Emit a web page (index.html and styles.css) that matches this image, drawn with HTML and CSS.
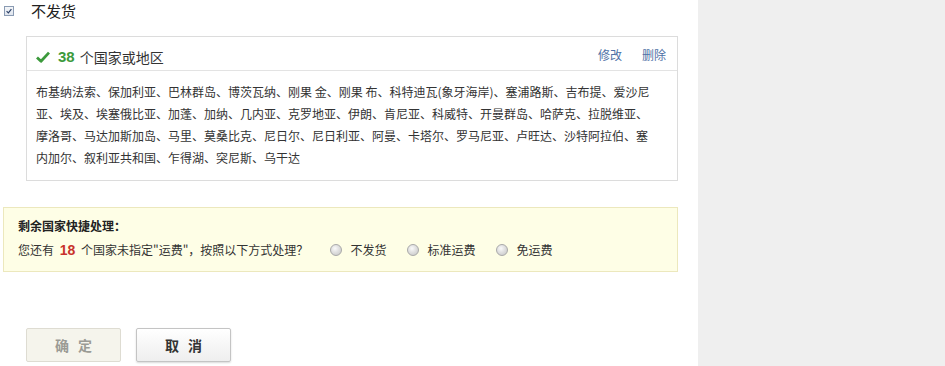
FILE: index.html
```html
<!DOCTYPE html>
<html lang="zh-CN">
<head>
<meta charset="utf-8">
<title>运费模板 - 不发货</title>
<link rel="stylesheet" href="styles.css">
</head>
<body>
<div class="page">
  <div class="main">
    <label class="opt-head">
      <span class="cb"><svg viewBox="0 0 10 10" width="10" height="10"><path d="M2 5.2 L4.2 7.4 L8 2.6" fill="none" stroke="#2b3f66" stroke-width="1.4"/></svg></span>
      <span class="opt-title">不发货</span>
    </label>

    <div class="region">
      <div class="region-head">
        <svg class="ok" viewBox="0 0 14 12" width="14" height="12"><path d="M1 6.4 L5 10.2 L13 1.6" fill="none" stroke="#3c9a3c" stroke-width="2.8" stroke-linejoin="round"/></svg>
        <b class="num">38</b>
        <span class="head-text">个国家或地区</span>
        <span class="actions"><a href="#">修改</a><a href="#">删除</a></span>
      </div>
      <div class="region-body">布基纳法索、保加利亚、巴林群岛、博茨瓦纳、刚果 金、刚果 布、科特迪瓦(象牙海岸)、塞浦路斯、吉布提、爱沙尼亚、埃及、埃塞俄比亚、加蓬、加纳、几内亚、克罗地亚、伊朗、肯尼亚、科威特、开曼群岛、哈萨克、拉脱维亚、摩洛哥、马达加斯加岛、马里、莫桑比克、尼日尔、尼日利亚、阿曼、卡塔尔、罗马尼亚、卢旺达、沙特阿拉伯、塞内加尔、叙利亚共和国、乍得湖、突尼斯、乌干达</div>
    </div>

    <div class="quick">
      <div class="quick-title">剩余国家快捷处理：</div>
      <div class="quick-row">
        <span class="q">您还有 <b class="red">18</b> 个国家未指定"运费"，按照以下方式处理？</span>
        <label class="radio"><span class="rd"></span>不发货</label>
        <label class="radio"><span class="rd"></span>标准运费</label>
        <label class="radio"><span class="rd"></span>免运费</label>
      </div>
    </div>

    <div class="btns">
      <button class="btn btn-disabled" type="button">确定</button>
      <button class="btn btn-cancel" type="button">取消</button>
    </div>
  </div>
  <aside class="side"></aside>
</div>
</body>
</html>
```
FILE: styles.css
```css
* { box-sizing: border-box; }
html, body { margin: 0; padding: 0; }
body {
  font-family: "Noto Sans CJK SC", "Liberation Sans", sans-serif;
  font-size: 12px;
  color: #333;
  background: #fff;
}
.page {
  display: flex;
  min-height: 366px;
}
.main {
  width: 698px;
  padding-left: 3px;
}
.side {
  flex: 1;
  background: #efefef;
}

/* header option */
.opt-head {
  display: flex;
  align-items: center;
  height: 22px;
}
.cb {
  width: 10px;
  height: 10px;
  border: 1px solid #8a9bb3;
  background: linear-gradient(#f4f6f9, #dfe5ee);
  display: flex;
  align-items: center;
  justify-content: center;
  margin-right: 17px;
  margin-left: 1px;
}
.cb svg { width: 8px; height: 8px; display: block; }
.opt-title {
  font-size: 15px;
  line-height: 20px;
  color: #222;
}

/* region box */
.region {
  margin: 14px 0 0 23px;
  width: 652px;
  border: 1px solid #dcdcdc;
}
.region-head {
  display: flex;
  align-items: center;
  height: 34px;
  padding: 6px 11px 0 9px;
  border-bottom: 1px solid #e3e3e3;
  font-size: 14px;
}
.ok { display: block; margin-right: 8px; }
.num {
  color: #3c9a3c;
  font-family: "Liberation Sans", sans-serif;
  font-size: 15px;
  margin-right: 5px;
}
.head-text { color: #333; }
.actions {
  margin-left: auto;
  display: flex;
  gap: 20px;
  font-size: 12px;
  margin-top: -4px;
}
.actions a {
  color: #4f71a6;
  text-decoration: none;
}
.region-body {
  padding: 10px 21px 11px 9px;
  line-height: 22px;
  font-size: 12px;
  color: #333;
}

/* quick box */
.quick {
  margin-top: 26px;
  width: 675px;
  height: 65px;
  background: #fefee6;
  border: 1px solid #ece8bd;
  padding: 9px 14px 0 14px;
}
.quick-title {
  font-weight: bold;
  line-height: 18px;
  color: #222;
}
.quick-row {
  display: flex;
  align-items: center;
  margin-top: 6px;
  line-height: 18px;
}
.q { margin-right: 22px; }
.red {
  color: #c8322c;
  font-family: "Liberation Sans", sans-serif;
  font-size: 14px;
  margin: 0 3px;
}
.radio {
  display: flex;
  align-items: center;
  margin-right: 21px;
}
.rd {
  width: 12px;
  height: 12px;
  border-radius: 50%;
  border: 1px solid #a9a9a9;
  background: radial-gradient(circle at 40% 35%, #fafafa 0, #e0e0e0 45%, #c4c4c4 100%);
  margin-right: 8px;
}

/* buttons */
.btns {
  display: flex;
  gap: 15px;
  margin: 56px 0 0 23px;
}
.btn {
  width: 95px;
  height: 34px;
  font-family: "Noto Sans CJK SC", sans-serif;
  font-size: 14px;
  font-weight: bold;
  letter-spacing: 9px;
  text-indent: 9px;
  border-radius: 2px;
  padding: 0;
  cursor: pointer;
}
.btn-disabled {
  background: #f5f4ec;
  border: 1px solid #dedcd2;
  color: #9b9b95;
}
.btn-cancel {
  background: linear-gradient(#ffffff, #eeeeee);
  border: 1px solid #c4c4c4;
  color: #333;
  box-shadow: 0 1px 2px rgba(0,0,0,0.15);
}
```
